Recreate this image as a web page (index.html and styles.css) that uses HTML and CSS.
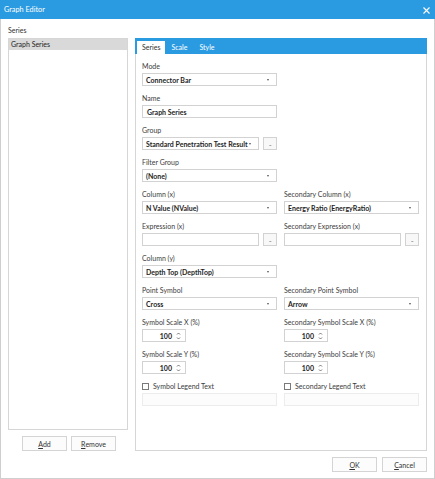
FILE: index.html
```html
<!DOCTYPE html>
<html>
<head>
<meta charset="utf-8">
<link rel="stylesheet" href="styles.css">
</head>
<body>
<div class="window">
  <div class="titlebar">
    <span class="title">Graph Editor</span>
    <svg class="close" width="7" height="7" viewBox="0 0 7 7"><path d="M0.5 0.5L6.5 6.5M6.5 0.5L0.5 6.5" stroke="#fff" stroke-width="1.1"/></svg>
  </div>
  <div class="main">
    <div class="leftcol">
      <div class="caption">Series</div>
      <div class="list">
        <div class="item selected">Graph Series</div>
      </div>
      <div class="btnrow">
        <div class="btn"><u>A</u>dd</div>
        <div class="btn"><u>R</u>emove</div>
      </div>
    </div>
    <div class="tabpanel">
      <div class="tabbar">
        <div class="tab active">Series</div>
        <div class="tab">Scale</div>
        <div class="tab">Style</div>
      </div>
      <div class="form">
        <div class="field">
          <div class="lbl">Mode</div>
          <div class="combo"><span>Connector Bar</span><i class="arrow"></i></div>
        </div>
        <div class="field"></div>

        <div class="field">
          <div class="lbl">Name</div>
          <div class="textbox">Graph Series</div>
        </div>
        <div class="field"></div>

        <div class="field">
          <div class="lbl">Group</div>
          <div class="withbtn">
            <div class="combo grow"><span>Standard Penetration Test Result</span><i class="arrow"></i></div>
            <div class="dots">...</div>
          </div>
        </div>
        <div class="field"></div>

        <div class="field">
          <div class="lbl">Filter Group</div>
          <div class="combo"><span>(None)</span><i class="arrow"></i></div>
        </div>
        <div class="field"></div>

        <div class="field">
          <div class="lbl">Column (x)</div>
          <div class="combo"><span>N Value (NValue)</span><i class="arrow"></i></div>
        </div>
        <div class="field">
          <div class="lbl">Secondary Column (x)</div>
          <div class="combo"><span>Energy Ratio (EnergyRatio)</span><i class="arrow"></i></div>
        </div>

        <div class="field">
          <div class="lbl">Expression (x)</div>
          <div class="withbtn">
            <div class="textbox grow"></div>
            <div class="dots">...</div>
          </div>
        </div>
        <div class="field">
          <div class="lbl">Secondary Expression (x)</div>
          <div class="withbtn">
            <div class="textbox grow"></div>
            <div class="dots">...</div>
          </div>
        </div>

        <div class="field">
          <div class="lbl">Column (y)</div>
          <div class="combo"><span>Depth Top (DepthTop)</span><i class="arrow"></i></div>
        </div>
        <div class="field"></div>

        <div class="field">
          <div class="lbl">Point Symbol</div>
          <div class="combo"><span>Cross</span><i class="arrow"></i></div>
        </div>
        <div class="field">
          <div class="lbl">Secondary Point Symbol</div>
          <div class="combo"><span>Arrow</span><i class="arrow"></i></div>
        </div>

        <div class="field">
          <div class="lbl">Symbol Scale X (%)</div>
          <div class="numeric"><span>100</span><svg class="spin" width="5" height="8" viewBox="0 0 5 8"><path d="M1 2.5L2.5 1L4 2.5M1 5.5L2.5 7L4 5.5" fill="none" stroke="#555" stroke-width="0.8"/></svg></div>
        </div>
        <div class="field">
          <div class="lbl">Secondary Symbol Scale X (%)</div>
          <div class="numeric"><span>100</span><svg class="spin" width="5" height="8" viewBox="0 0 5 8"><path d="M1 2.5L2.5 1L4 2.5M1 5.5L2.5 7L4 5.5" fill="none" stroke="#555" stroke-width="0.8"/></svg></div>
        </div>

        <div class="field">
          <div class="lbl">Symbol Scale Y (%)</div>
          <div class="numeric"><span>100</span><svg class="spin" width="5" height="8" viewBox="0 0 5 8"><path d="M1 2.5L2.5 1L4 2.5M1 5.5L2.5 7L4 5.5" fill="none" stroke="#555" stroke-width="0.8"/></svg></div>
        </div>
        <div class="field">
          <div class="lbl">Secondary Symbol Scale Y (%)</div>
          <div class="numeric"><span>100</span><svg class="spin" width="5" height="8" viewBox="0 0 5 8"><path d="M1 2.5L2.5 1L4 2.5M1 5.5L2.5 7L4 5.5" fill="none" stroke="#555" stroke-width="0.8"/></svg></div>
        </div>

        <div class="field">
          <div class="lbl check"><i class="box"></i>Symbol Legend Text</div>
          <div class="textbox disabled"></div>
        </div>
        <div class="field">
          <div class="lbl check"><i class="box"></i>Secondary Legend Text</div>
          <div class="textbox disabled"></div>
        </div>
      </div>
    </div>
  </div>
  <div class="footer">
    <div class="btn"><u>O</u>K</div>
    <div class="btn"><u>C</u>ancel</div>
  </div>
</div>
</body>
</html>
```

FILE: styles.css
```css
html, body {
  margin: 0;
  padding: 0;
  background: #ffffff;
}
body {
  font-family: Lato, "Open Sans", sans-serif;
  font-size: 7px;
  color: #333333;
}
.window {
  width: 435px;
  height: 479px;
  box-sizing: border-box;
  border: 1px solid #cfcfcf;
  border-top: none;
  background: #ffffff;
  display: flex;
  flex-direction: column;
}
.titlebar {
  height: 19px;
  margin: 0 -1px;
  background: #2b9be1;
  display: flex;
  align-items: center;
  justify-content: space-between;
  padding: 0 5px 0 4px;
  flex: none;
}
.title {
  color: #ffffff;
  font-size: 7.3px;
}
.close {
  display: block;
  margin-top: 1px;
}
.main {
  display: flex;
  padding: 5px 7px 0 7px;
  gap: 7px;
  height: 427px;
  flex: none;
}
.leftcol {
  width: 120px;
  display: flex;
  flex-direction: column;
}
.caption {
  height: 12px;
  line-height: 12px;
  margin-bottom: 2px;
}
.list {
  height: 392px;
  box-sizing: border-box;
  border: 1px solid #d6d6d6;
  padding: 0;
}
.item {
  height: 11px;
  line-height: 11px;
  padding-left: 2px;
  color: #222;
}
.item.selected {
  background: #d9d9d9;
}
.btnrow {
  margin-top: 6px;
  display: flex;
  justify-content: center;
  gap: 4px;
  padding-left: 2px;
}
.btn {
  width: 45px;
  height: 15px;
  box-sizing: border-box;
  border: 1px solid #d4d4d4;
  background: #fcfcfc;
  display: flex;
  align-items: center;
  justify-content: center;
  color: #333;
}
.btn u {
  text-decoration-thickness: 0.6px;
  text-underline-offset: 1px;
}
.tabpanel {
  width: 292px;
  height: 413px;
  margin-top: 14px;
  box-sizing: border-box;
  border: 1px solid #d6d6d6;
  border-top: none;
  display: flex;
  flex-direction: column;
}
.tabbar {
  height: 16px;
  background: #2b9be1;
  display: flex;
  align-items: flex-end;
  padding-left: 1px;
  margin: 0 -1px;
  flex: none;
}
.tab {
  height: 13px;
  line-height: 13px;
  padding: 0 6px;
  color: #ffffff;
}
.tab.active {
  background: #ffffff;
  color: #333333;
  padding: 0 5px 0 5px;
  margin-left: 1px;
}
.form {
  display: grid;
  grid-template-columns: 135px 135px;
  column-gap: 7px;
  row-gap: 6px;
  padding: 6px 0 0 6px;
}
.field {
  min-height: 26px;
}
.lbl {
  height: 12px;
  line-height: 12px;
  margin-bottom: 1px;
  color: #3c3c3c;
}
.lbl.check {
  display: flex;
  align-items: center;
}
.box {
  width: 7px;
  height: 7px;
  box-sizing: border-box;
  border: 1px solid #7a7a7a;
  margin-right: 4px;
  background: #fff;
}
.combo, .textbox, .numeric {
  height: 13px;
  box-sizing: border-box;
  border: 1px solid #d2d2d2;
  background: #ffffff;
  display: flex;
  align-items: center;
}
.combo {
  justify-content: space-between;
  padding: 0 7px 0 3px;
  font-weight: 700;
  color: #1e1e1e;
  white-space: nowrap;
  overflow: hidden;
}
.arrow {
  flex: none;
  width: 0;
  height: 0;
  border-left: 1.8px solid transparent;
  border-right: 1.8px solid transparent;
  border-top: 2px solid #555;
}
.textbox {
  padding-left: 4px;
  font-weight: 700;
  color: #1e1e1e;
}
.textbox.disabled {
  border-color: #ececec;
  background: #fcfcfc;
  margin-top: 1px;
}
.withbtn {
  display: flex;
  gap: 4px;
}
.grow {
  flex: 1;
}
.dots {
  width: 14px;
  height: 13px;
  box-sizing: border-box;
  border: 1px solid #d2d2d2;
  background: #f8f8f8;
  display: flex;
  align-items: center;
  justify-content: center;
  font-size: 5px;
  color: #555;
  letter-spacing: -0.5px;
  flex: none;
}
.numeric {
  width: 44px;
  justify-content: flex-end;
  padding-right: 4px;
  gap: 4px;
  font-weight: 700;
  color: #1e1e1e;
}
.spin {
  display: block;
}
.footer {
  display: flex;
  justify-content: flex-end;
  gap: 5px;
  padding: 6px 7px 0 0;
}
```
